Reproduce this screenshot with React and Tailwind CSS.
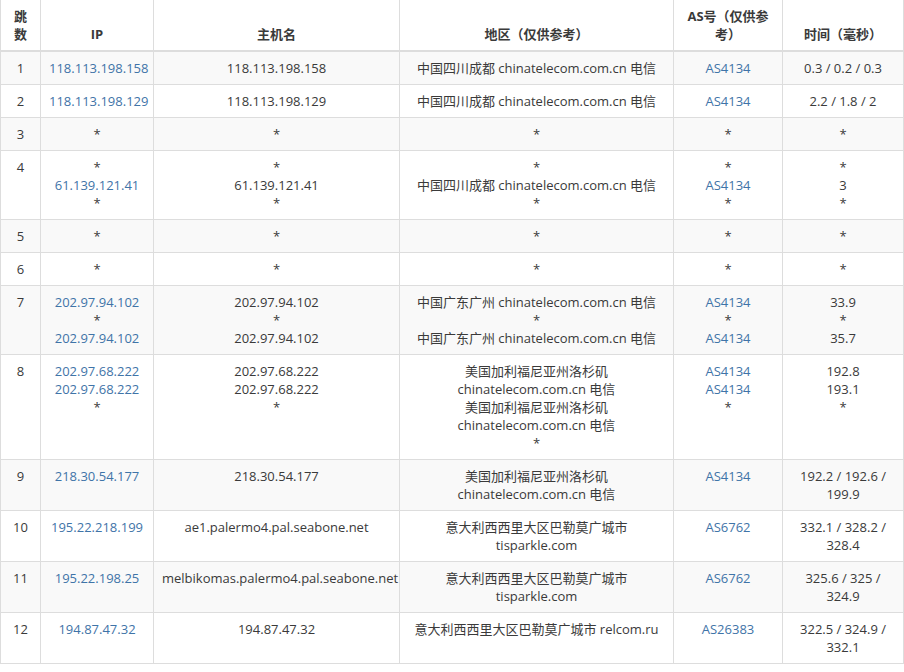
import React from 'react';

const S = '*';
const rows = [
  ['1', ['118.113.198.158'], ['118.113.198.158'], ['中国四川成都 chinatelecom.com.cn 电信'], ['AS4134'], ['0.3 / 0.2 / 0.3']],
  ['2', ['118.113.198.129'], ['118.113.198.129'], ['中国四川成都 chinatelecom.com.cn 电信'], ['AS4134'], ['2.2 / 1.8 / 2']],
  ['3', [S], [S], [S], [S], [S]],
  ['4', [S, '61.139.121.41', S], [S, '61.139.121.41', S], [S, '中国四川成都 chinatelecom.com.cn 电信', S], [S, 'AS4134', S], [S, '3', S]],
  ['5', [S], [S], [S], [S], [S]],
  ['6', [S], [S], [S], [S], [S]],
  ['7', ['202.97.94.102', S, '202.97.94.102'], ['202.97.94.102', S, '202.97.94.102'], ['中国广东广州 chinatelecom.com.cn 电信', S, '中国广东广州 chinatelecom.com.cn 电信'], ['AS4134', S, 'AS4134'], ['33.9', S, '35.7']],
  ['8', ['202.97.68.222', '202.97.68.222', S], ['202.97.68.222', '202.97.68.222', S], ['美国加利福尼亚州洛杉矶', 'chinatelecom.com.cn 电信', '美国加利福尼亚州洛杉矶', 'chinatelecom.com.cn 电信', S], ['AS4134', 'AS4134', S], ['192.8', '193.1', S]],
  ['9', ['218.30.54.177'], ['218.30.54.177'], ['美国加利福尼亚州洛杉矶', 'chinatelecom.com.cn 电信'], ['AS4134'], ['192.2 / 192.6 /', '199.9']],
  ['10', ['195.22.218.199'], ['ae1.palermo4.pal.seabone.net'], ['意大利西西里大区巴勒莫广城市', 'tisparkle.com'], ['AS6762'], ['332.1 / 328.2 /', '328.4']],
  ['11', ['195.22.198.25'], ['melbikomas.palermo4.pal.seabone.net'], ['意大利西西里大区巴勒莫广城市', 'tisparkle.com'], ['AS6762'], ['325.6 / 325 /', '324.9']],
  ['12', ['194.87.47.32'], ['194.87.47.32'], ['意大利西西里大区巴勒莫广城市 relcom.ru'], ['AS26383'], ['322.5 / 324.9 /', '332.1']],
];

const Lines = ({ items, link }) => (
  <>
    {items.map((t, i) => (
      <div key={i} className={'h-[18px] overflow-visible whitespace-nowrap ' + (link && t !== S ? 'text-[#3f74a8]' : '')}>{t}</div>
    ))}
  </>
);

export default function App() {
  const td = 'border border-[#ddd] px-2 py-[7px] text-center align-top';
  const th = 'border border-[#ddd] border-t-0 border-b-2 px-2 py-[7px] text-center align-bottom font-bold';
  return (
    <div className="bg-white" style={{ fontFamily: '"Open Sans", "Noto Sans CJK SC", sans-serif' }}>
      <table className="table-fixed border-collapse w-[903px] text-[13px] leading-[18px] text-[#3a3a3a]">
        <colgroup>
          <col className="w-[40px]" />
          <col className="w-[113px]" />
          <col className="w-[246px]" />
          <col className="w-[274px]" />
          <col className="w-[109px]" />
          <col className="w-[121px]" />
        </colgroup>
        <thead>
          <tr>
            <th className={th}>跳数</th>
            <th className={th}>IP</th>
            <th className={th}>主机名</th>
            <th className={th}>地区（仅供参考）</th>
            <th className={th}>AS号（仅供参考）</th>
            <th className={th}>时间（毫秒）</th>
          </tr>
        </thead>
        <tbody>
          {rows.map((r, i) => (
            <tr key={r[0]} className={i % 2 === 0 ? 'bg-[#f9f9f9]' : 'bg-white'}>
              <td className={td}>{r[0]}</td>
              <td className={td}><Lines items={r[1]} link /></td>
              <td className={td}><Lines items={r[2]} /></td>
              <td className={td}><Lines items={r[3]} /></td>
              <td className={td}><Lines items={r[4]} link /></td>
              <td className={td}><Lines items={r[5]} /></td>
            </tr>
          ))}
        </tbody>
      </table>
    </div>
  );
}
